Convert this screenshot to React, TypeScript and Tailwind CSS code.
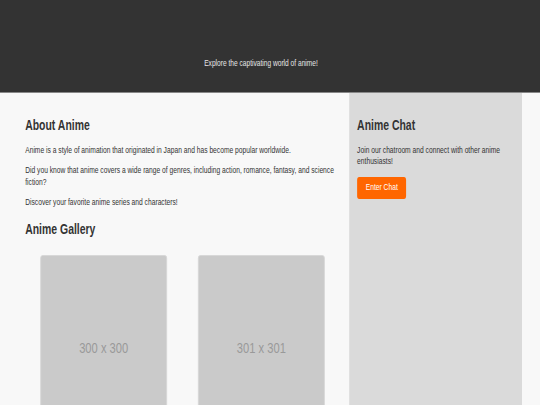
// The reference is a horizontally squeezed render, so the page is laid out at 750px and scaled on x.
export default function App() {
  const images = ['300 x 300', '301 x 301'];

  return (
    <div className="w-[540px] overflow-hidden bg-[#f8f8f8]">
      <div className="w-[750px] min-h-[405px] origin-top-left scale-x-[0.72] bg-[#f8f8f8] text-[#333] font-['Liberation_Sans',Arial,sans-serif]">
        <header className="h-[93px] bg-[#333] border-b border-[#888] flex items-end justify-center pb-[21px] pr-[25px]">
          <p className="text-[9.2px] text-[#e6e6e6]">Explore the captivating world of anime!</p>
        </header>

        <main className="flex">
          <section className="w-[485px] pl-[35px] pr-[17px] pt-[23px]">
            <h2 className="text-[14.5px] font-bold leading-[18px] mb-[10px]">About Anime</h2>
            <p className="text-[9.3px] leading-[12px] mb-[8px]">
              Anime is a style of animation that originated in Japan and has become popular worldwide.
            </p>
            <p className="text-[9.3px] leading-[12px] mb-[8px]">
              Did you know that anime covers a wide range of genres, including action, romance, fantasy, and science fiction?
            </p>
            <p className="text-[9.3px] leading-[12px] mb-[12px]">Discover your favorite anime series and characters!</p>

            <h2 className="text-[14.5px] font-bold leading-[18px] mb-[17px]">Anime Gallery</h2>
            <div className="flex gap-[43px] pl-[21px]">
              {images.map((label) => (
                <div
                  key={label}
                  className="w-[176px] h-[186px] bg-[#cacaca] border border-[#d6d6d6] rounded-[3px] flex items-center justify-center"
                >
                  <span className="text-[15.5px] text-[#999]">{label}</span>
                </div>
              ))}
            </div>
          </section>

          <aside className="w-[240px] min-h-[312px] bg-[#dadada] px-[11px] pt-[23px]">
            <h2 className="text-[14.5px] font-bold leading-[18px] mb-[11px]">Anime Chat</h2>
            <p className="text-[9.3px] leading-[11px] mb-[6px]">
              Join our chatroom and connect with other anime enthusiasts!
            </p>
            <button className="h-[22px] px-[12px] bg-[#ff6600] text-white text-[9.3px] rounded-[3px]">Enter Chat</button>
          </aside>
        </main>
      </div>
    </div>
  );
}
